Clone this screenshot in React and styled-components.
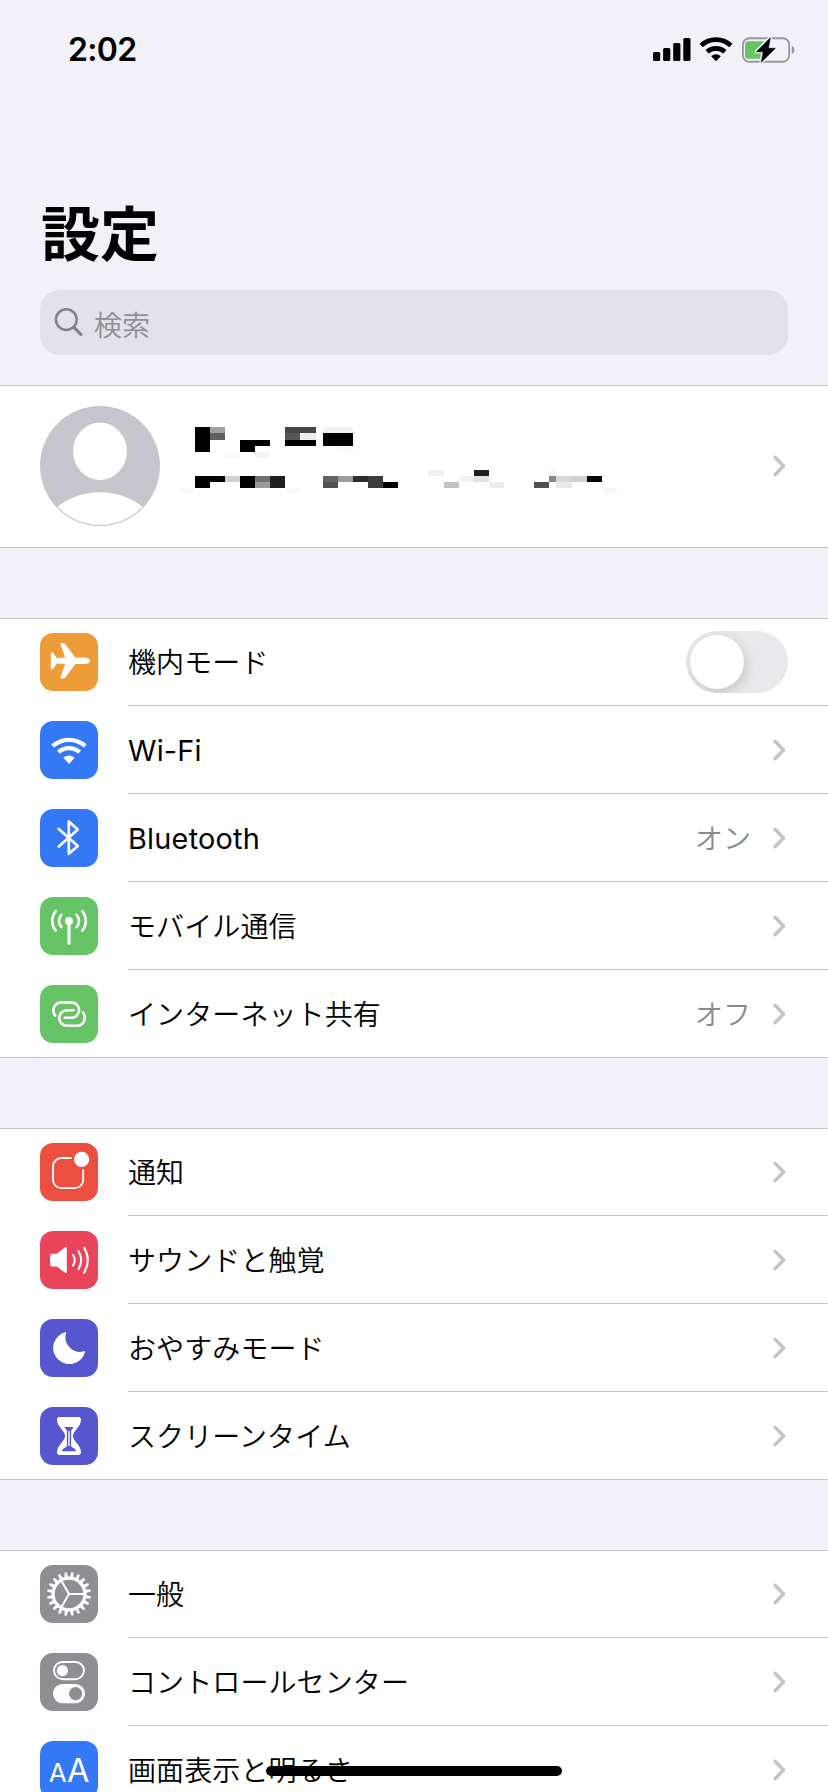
import * as React from "react"
import styled, { createGlobalStyle } from "styled-components"

const polar = (cx, cy, r, deg) => {
  const a = (deg * Math.PI) / 180
  return `${(cx + r * Math.sin(a)).toFixed(2)} ${(cy - r * Math.cos(a)).toFixed(2)}`
}

const fan = (cx, cy, r, deg = 42) =>
  `M${polar(cx, cy, r, -deg)} A${r} ${r} 0 0 1 ${polar(cx, cy, r, deg)}`

const gearTeeth = Array.from({ length: 20 }, (_, i) => {
  const a = i * 18 + 9
  return `M${polar(29, 29, 17, a - 6)} L${polar(29, 29, 22, a - 2.8)} L${polar(29, 29, 22, a + 2.8)} L${polar(29, 29, 17, a + 6)}Z`
}).join("")

const AirplaneIcon = () => (
  <Glyph viewBox="0 0 58 58">
    <path
      fill="#fff"
      d="M50 27.8c0-2.2-3-3.3-6-3.3h-8.6L25.5 11.4c-.8-1-1.6-1.4-2.8-1.4h-1.3c-.8 0-1.2.6-.9 1.4l4.6 13.1-8.3.6-3.4-5c-.4-.6-.8-.8-1.3-.8h-.4c-.6 0-.9.4-.9 1v15c0 .6.3 1 .9 1h.4c.5 0 .9-.2 1.3-.8l3.4-5 8.3.6-4.6 13.1c-.3.8.1 1.4.9 1.4h1.3c1.2 0 2-.4 2.8-1.4l9.9-13.1H44c3 0 6-1.1 6-3.3z"
    />
  </Glyph>
)

const WifiIcon = () => (
  <Glyph viewBox="0 0 58 58">
    <path d={fan(29, 43, 24.2)} fill="none" stroke="#fff" strokeWidth="4.2" />
    <path d={fan(29, 43, 15.9)} fill="none" stroke="#fff" strokeWidth="4.2" />
    <path d={`${fan(29, 43, 8.4)} L29 43Z`} fill="#fff" />
  </Glyph>
)

const BluetoothIcon = () => (
  <Glyph viewBox="0 0 58 58">
    <path
      d="M18.8 20 37.8 37 28.8 44.8V12.4L37.8 20.4 18.8 37.4"
      fill="none"
      stroke="#fff"
      strokeWidth="2.7"
      strokeLinecap="round"
      strokeLinejoin="round"
    />
  </Glyph>
)

const AntennaIcon = () => (
  <Glyph viewBox="0 0 58 58">
    <circle cx="29" cy="23.9" r="4" fill="#fff" />
    <g fill="none" stroke="#fff" strokeWidth="2.6" strokeLinecap="round">
      <path d="M29 25V46.2" strokeWidth="3" />
      <path d="M15.8 14.2A15 15 0 0 0 15.8 33.6M21.4 17.8A9 9 0 0 0 21.4 30" />
      <path d="M42.2 14.2A15 15 0 0 1 42.2 33.6M36.6 17.8A9 9 0 0 1 36.6 30" />
    </g>
  </Glyph>
)

const HotspotIcon = () => (
  <Glyph viewBox="0 0 58 58">
    <g fill="none" stroke="#fff" strokeWidth="2.6" strokeLinecap="round">
      <path d="M15.2 30.6A8.2 8.2 0 0 1 20.5 17.4H31.4A7.7 7.7 0 0 1 31.4 32.8H24.8" />
      <path d="M33.4 25.2H27A7.8 7.8 0 0 0 27 40.8H37.6A8.2 8.2 0 0 0 42.9 27.4" />
    </g>
  </Glyph>
)

const NotificationIcon = () => (
  <Glyph viewBox="0 0 58 58">
    <path
      d="M31.6 15H21.4A8.4 8.4 0 0 0 13 23.4V36.7A8.4 8.4 0 0 0 21.4 45.1H34.8A8.4 8.4 0 0 0 43.2 36.7V26.6"
      fill="none"
      stroke="#fff"
      strokeWidth="1.9"
    />
    <circle cx="41.6" cy="16.4" r="7.6" fill="#fff" />
  </Glyph>
)

const SoundIcon = () => (
  <Glyph viewBox="0 0 58 58">
    <path
      fill="#fff"
      d="M12 22.8h4.8l8-6.2c1-.8 2-.4 2 .9v23.2c0 1.3-1 1.7-2 .9l-8-6.2H12c-1.2 0-1.9-.7-1.9-1.9v-8.8c0-1.2.7-1.9 1.9-1.9z"
    />
    <g fill="none" stroke="#fff" strokeWidth="2.1" strokeLinecap="round">
      <path d="M33 23.8Q36.4 29.2 33 34.6" />
      <path d="M38.5 20.2Q44 29.2 38.5 38.2" />
      <path d="M44.2 16.8Q51.4 29.2 44.2 41.6" />
    </g>
  </Glyph>
)

const MoonIcon = () => (
  <Glyph viewBox="0 0 58 58">
    <path
      fill="#fff"
      d="M25.2 13.2A16.2 16.2 0 1 0 45 33.2C45.3 32.3 44.9 32 44.1 32.3A14.8 14.8 0 0 1 26 14C26.2 13 26 12.900 25.2 13.2Z"
    />
  </Glyph>
)

const HourglassIcon = () => (
  <Glyph viewBox="0 0 58 58">
    <path
      fill="#fff"
      d="M19.5 10h19c1.6 0 2.5 1 2.5 2.5 0 7.5-8 11.3-8 16.5s8 9 8 16.5c0 1.5-.9 2.5-2.5 2.5h-19c-1.6 0-2.5-1-2.5-2.5 0-7.5 8-11.3 8-16.5s-8-9-8-16.5c0-1.5.9-2.5 2.5-2.5z"
    />
    <path
      fill="#5856ce"
      d="M24.3 20h9.4c-.4 1.6-2.6 2.4-2.6 4.2v14.3c0 2.2 4.8 2.7 5 5.7H21.9c.2-3 5-3.5 5-5.7V24.2c0-1.8-2.2-2.6-2.6-4.2z"
    />
    <path d="M29 24V39" stroke="#fff" strokeWidth="1.4" />
  </Glyph>
)

const GearIcon = () => (
  <Glyph viewBox="0 0 58 58">
    <path d={gearTeeth} fill="#fff" />
    <circle cx="29" cy="29" r="15.9" fill="none" stroke="#fff" strokeWidth="3.2" />
    <path d="M29 29H44M29 29 21.5 16M29 29 21.5 42" stroke="#fff" strokeWidth="2" />
  </Glyph>
)

const ControlIcon = () => (
  <Glyph viewBox="0 0 58 58">
    <rect x="14" y="9" width="30" height="17.2" rx="8.6" fill="none" stroke="#fff" strokeWidth="1.9" />
    <circle cx="22.4" cy="17.6" r="5.6" fill="#fff" />
    <rect x="13" y="31" width="32" height="19.2" rx="9.6" fill="#fff" />
    <circle cx="35.6" cy="40.6" r="6.6" fill="#8e8e93" />
  </Glyph>
)

const DisplayIcon = () => (
  <Glyph viewBox="0 0 58 58">
    <g fill="#fff" fontFamily="Inter, sans-serif" textAnchor="middle">
      <text x="17.8" y="41" fontSize="26">A</text>
      <text x="38.2" y="41" fontSize="32.5">A</text>
    </g>
  </Glyph>
)

const Chevron = () => (
  <ChevronSvg viewBox="0 0 13 24">
    <path d="M2 3.2 10.6 12 2 20.8" />
  </ChevronSvg>
)

const SignalIcon = () => (
  <svg width="38" height="26" viewBox="0 0 38 26">
    <rect x="0" y="15" width="7.2" height="9" rx="1.6" />
    <rect x="10.1" y="11" width="7.2" height="13" rx="1.6" />
    <rect x="20.2" y="6" width="7.2" height="18" rx="1.6" />
    <rect x="30.3" y="1" width="7.2" height="23" rx="1.6" />
  </svg>
)

const StatusWifiIcon = () => (
  <svg width="34" height="26" viewBox="0 0 34 26">
    <path d={fan(17, 24.3, 21.7, 43)} fill="none" stroke="#000" strokeWidth="4.8" />
    <path d={fan(17, 24.3, 13, 43)} fill="none" stroke="#000" strokeWidth="4.8" />
    <path d={`${fan(17, 24.3, 7, 43)} L17 24.3Z`} />
  </svg>
)

const BatteryIcon = () => (
  <svg width="54" height="28" viewBox="0 0 54 28">
    <rect x="1.9" y="2.2" width="46.3" height="23.6" rx="6.5" fill="none" stroke="#98989d" strokeWidth="1.9" />
    <path d="M50.8 9.8C54.3 11.2 54.3 16.6 50.8 18Z" fill="#98989d" />
    <path d="M7.5 5.2H25V22.8H7.5A3.4 3.4 0 0 1 4.1 19.4V8.6A3.4 3.4 0 0 1 7.5 5.2Z" fill="#66c466" />
    <path
      d="M29.3 1.8 15.4 15.8H22.2L20.3 26.3 34.3 12.3H27.4Z"
      stroke="#f2f1f7"
      strokeWidth="3.6"
      strokeLinejoin="round"
    />
    <path d="M29.3 1.8 15.4 15.8H22.2L20.3 26.3 34.3 12.3H27.4Z" stroke="#000" strokeWidth=".6" strokeLinejoin="round" />
  </svg>
)

const SearchIcon = () => (
  <svg width="30" height="30" viewBox="0 0 30 30" fill="none" stroke="#828287">
    <circle cx="12.3" cy="11.6" r="10.4" strokeWidth="2.5" />
    <path d="M19.8 19.2 26.9 26.4" strokeWidth="3.2" strokeLinecap="round" />
  </svg>
)

const Avatar = () => (
  <svg width="120" height="120" viewBox="0 0 120 120">
    <circle cx="60" cy="60" r="60" fill="#c7c6cc" />
    <ellipse cx="60" cy="45.3" rx="27" ry="28.7" fill="#fff" />
    <path d="M17.6 100.8A60 50 0 0 1 102.4 100.8A58.9 58.9 0 0 1 17.6 100.8Z" fill="#fff" />
  </svg>
)

// censored name and subtitle: x, y, width, height, grey level
const blocks = [
  [15, 11, 15, 25, 0], [30, 11, 15, 6, 160], [30, 17, 15, 7, 96],
  [60, 24, 30, 6, 0], [60, 30, 15, 6, 0], [75, 36, 15, 6, 245], [45, 36, 15, 6, 250],
  [105, 11, 31, 6, 71], [105, 17, 15, 7, 86], [120, 17, 16, 7, 237], [105, 24, 31, 6, 0],
  [143, 11, 30, 6, 241], [143, 17, 30, 13, 0], [158, 30, 15, 7, 250],
  [15, 60, 15, 12, 0], [30, 60, 15, 6, 6], [45, 60, 15, 6, 208], [60, 60, 15, 12, 0],
  [75, 60, 15, 6, 112], [75, 66, 15, 6, 156], [90, 60, 15, 12, 31],
  [143, 60, 15, 6, 100], [143, 66, 15, 6, 80], [158, 60, 15, 6, 156],
  [173, 60, 15, 6, 44], [188, 60, 15, 12, 60], [203, 66, 15, 6, 0],
  [0, 72, 15, 6, 250], [105, 72, 15, 6, 250],
  [248, 54, 16, 6, 240], [264, 66, 15, 6, 194], [279, 60, 15, 6, 243],
  [294, 54, 15, 6, 30], [294, 60, 15, 6, 226], [309, 66, 15, 6, 236],
  [354, 66, 15, 6, 82], [369, 54, 7, 6, 245], [369, 60, 7, 6, 136],
  [376, 60, 16, 6, 217], [392, 60, 15, 6, 209], [376, 66, 16, 6, 232],
  [407, 60, 15, 6, 6], [422, 72, 15, 6, 248],
]

const CensoredName = () => (
  <svg width="440" height="100" viewBox="0 0 440 100" shapeRendering="crispEdges">
    {blocks.map(([x, y, w, h, v], i) => (
      <rect key={i} x={x} y={y} width={w} height={h} fill={`rgb(${v},${v},${v})`} />
    ))}
  </svg>
)

const groups = [
  [
    { label: "機内モード", color: "#ee9c3a", icon: AirplaneIcon, toggle: true },
    { label: "Wi-Fi", latin: true, color: "#3478f6", icon: WifiIcon },
    { label: "Bluetooth", latin: true, color: "#3478f6", icon: BluetoothIcon, value: "オン" },
    { label: "モバイル通信", color: "#67c466", icon: AntennaIcon },
    { label: "インターネット共有", color: "#67c466", icon: HotspotIcon, value: "オフ" },
  ],
  [
    { label: "通知", color: "#eb4f3f", icon: NotificationIcon },
    { label: "サウンドと触覚", color: "#ea445a", icon: SoundIcon },
    { label: "おやすみモード", color: "#5856ce", icon: MoonIcon },
    { label: "スクリーンタイム", color: "#5856ce", icon: HourglassIcon },
  ],
  [
    { label: "一般", color: "#8e8e93", icon: GearIcon },
    { label: "コントロールセンター", color: "#8e8e93", icon: ControlIcon },
    { label: "画面表示と明るさ", color: "#3478f6", icon: DisplayIcon },
  ],
]

const SettingsRow = ({ label, latin, color, icon: Icon, value, toggle }) => (
  <Row>
    <IconTile $color={color}>
      <Icon />
    </IconTile>
    <RowBody>
      <Label $latin={latin}>{label}</Label>
      {value && <Value>{value}</Value>}
      {toggle ? (
        <Toggle>
          <Knob />
        </Toggle>
      ) : (
        <Chevron />
      )}
    </RowBody>
  </Row>
)

export default function App() {
  return (
    <Screen>
      <GlobalStyle />
      <StatusBar>
        <Clock>2:02</Clock>
        <StatusIcons>
          <SignalIcon />
          <StatusWifiIcon />
          <BatteryIcon />
        </StatusIcons>
      </StatusBar>
      <Title>設定</Title>
      <SearchBar>
        <SearchIcon />
        <Placeholder>検索</Placeholder>
      </SearchBar>
      <Profile>
        <Avatar />
        <CensoredName />
        <Chevron />
      </Profile>
      {groups.map((rows, i) => (
        <Group key={i}>
          {rows.map((row) => (
            <SettingsRow key={row.label} {...row} />
          ))}
        </Group>
      ))}
      <HomeIndicator />
    </Screen>
  )
}

const GlobalStyle = createGlobalStyle`
  * {
    box-sizing: border-box;
  }

  body {
    margin: 0;
    background: #f2f1f7;
  }
`

const Screen = styled.main`
  position: relative;
  width: 828px;
  height: 1792px;
  overflow: hidden;
  background: #f2f1f7;
  color: #000;
  font-family: Inter, "Noto Sans CJK JP", sans-serif;
  font-size: 28px;

  svg {
    display: block;
    flex-shrink: 0;
  }
`

const StatusBar = styled.header`
  display: flex;
  align-items: center;
  justify-content: space-between;
  height: 100px;
  padding: 0 33px 0 68px;
`

const Clock = styled.span`
  font-size: 32px;
  font-weight: 600;
  line-height: 40px;
  letter-spacing: -0.7px;
`

const StatusIcons = styled.div`
  display: flex;
  align-items: center;
  gap: 8px;
`

const Title = styled.h1`
  margin: 89px 0 0 41px;
  font-family: "Noto Sans CJK JP", sans-serif;
  font-size: 59px;
  font-weight: 700;
  line-height: 84px;
`

const SearchBar = styled.div`
  display: flex;
  align-items: center;
  gap: 10px;
  height: 65px;
  margin: 17px 40px 0;
  padding: 0 14px;
  border-radius: 20px;
  background: #e3e2e8;
`

const Placeholder = styled.span`
  padding-top: 3px;
  font-family: "Noto Sans CJK JP", sans-serif;
  font-weight: 350;
  line-height: 40px;
  color: #8f8f94;
`

const Profile = styled.section`
  display: flex;
  align-items: center;
  gap: 20px;
  height: 163px;
  margin-top: 30px;
  padding: 0 42px 1px 40px;
  border: solid #c6c6c8;
  border-width: 1px 0;
  background: #fff;

  > :last-child {
    margin-left: auto;
  }
`

const Group = styled.section`
  margin-top: 70px;
  background: #fff;
  box-shadow: inset 0 1px #c6c6c8, inset 0 -1px #c6c6c8;
`

const RowBody = styled.div`
  display: flex;
  flex: 1;
  align-items: center;
  height: 88px;
  padding-right: 42px;
  border-bottom: 1px solid #c6c6c8;
`

const Row = styled.div`
  display: flex;
  align-items: center;
  gap: 30px;
  height: 88px;
  padding-left: 40px;

  &:last-child ${RowBody} {
    border-bottom-color: transparent;
  }
`

const IconTile = styled.div`
  width: 58px;
  height: 58px;
  border-radius: 13px;
  background: ${({ $color }) => $color};
`

const Glyph = styled.svg`
  width: 58px;
  height: 58px;
`

const Label = styled.span`
  flex: 1;
  padding-top: 2px;
  font-size: ${({ $latin }) => ($latin ? "28.8px" : "28px")};
  font-weight: ${({ $latin }) => ($latin ? 400 : 350)};
  letter-spacing: ${({ $latin }) => ($latin ? "0.25px" : "0.1px")};
  line-height: 40px;
`

const Value = styled.span`
  margin-right: 22px;
  padding-top: 2px;
  font-weight: 350;
  line-height: 40px;
  color: #8a8a8e;
`

const ChevronSvg = styled.svg`
  width: 13px;
  height: 24px;
  fill: none;
  stroke: #c5c5c7;
  stroke-width: 3.4px;
  stroke-linecap: round;
  stroke-linejoin: round;
`

const Toggle = styled.div`
  width: 102px;
  height: 62px;
  margin-right: -2px;
  padding: 4px;
  border-radius: 31px;
  background: #e9e9eb;
  overflow: hidden;
`

const Knob = styled.div`
  width: 54px;
  height: 54px;
  border-radius: 50%;
  background: #fff;
  box-shadow: 2px 4px 12px rgba(0, 0, 0, 0.16);
`

const HomeIndicator = styled.div`
  position: absolute;
  bottom: 16px;
  left: 266px;
  width: 296px;
  height: 10px;
  border-radius: 5px;
  background: #000;
`
